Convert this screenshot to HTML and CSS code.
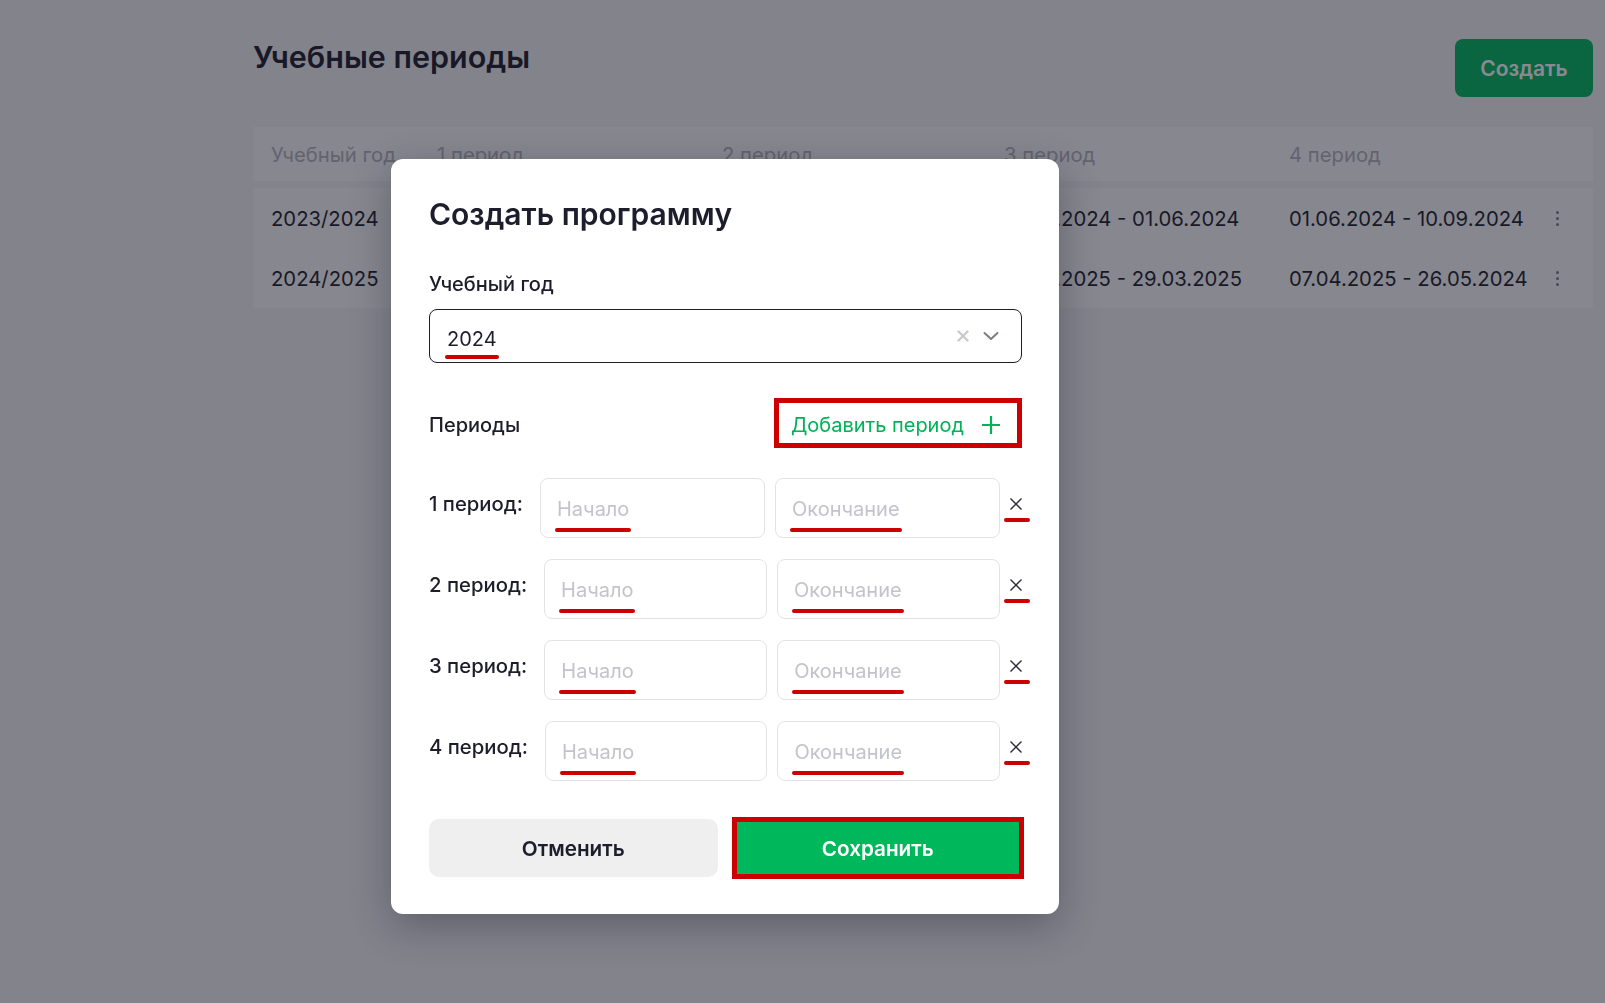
FILE: index.html
```html
<!DOCTYPE html>
<html lang="ru">
<head>
<meta charset="utf-8">
<title>Учебные периоды</title>
<link rel="stylesheet" href="styles.css">
</head>
<body>
<div class="page">
  <div class="page-head">
    <h1 class="page-title">Учебные периоды</h1>
    <button class="btn-create">Создать</button>
  </div>
  <div class="table">
    <div class="t-head">
      <div>Учебный год</div>
      <div>1 период</div>
      <div>2 период</div>
      <div>3 период</div>
      <div>4 период</div>
      <div></div>
    </div>
    <div class="t-body">
      <div class="t-row">
        <div>2023/2024</div>
        <div></div>
        <div></div>
        <div>09.01.2024 - 01.06.2024</div>
        <div>01.06.2024 - 10.09.2024</div>
        <div class="kebab"><span></span><span></span><span></span></div>
      </div>
      <div class="t-row">
        <div>2024/2025</div>
        <div></div>
        <div></div>
        <div>09.01.2025 - 29.03.2025</div>
        <div>07.04.2025 - 26.05.2024</div>
        <div class="kebab"><span></span><span></span><span></span></div>
      </div>
    </div>
  </div>
</div>

<div class="overlay">
  <div class="modal">
    <h2 class="modal-title">Создать программу</h2>

    <div class="field-label">Учебный год</div>
    <div class="select">
      <span class="select-value"><span class="mark">2024</span></span>
      <span class="select-icons">
        <svg class="icon-clear" width="12" height="12" viewBox="0 0 12 12"><path d="M1.5 1.5L10.5 10.5M10.5 1.5L1.5 10.5" stroke="#c9c9cf" stroke-width="2.4" stroke-linecap="round" fill="none"/></svg>
        <svg class="icon-chevron" width="16" height="10" viewBox="0 0 16 10"><path d="M1.5 2L8 8L14.5 2" stroke="#7b7b86" stroke-width="2" stroke-linecap="round" stroke-linejoin="round" fill="none"/></svg>
      </span>
    </div>

    <div class="periods-head">
      <span class="periods-label">Периоды</span>
      <button class="btn-add">
        <span class="btn-add-text">Добавить период</span>
        <svg width="20" height="20" viewBox="0 0 20 20"><path d="M10 1V19M1 10H19" stroke="#00b357" stroke-width="2.2" fill="none"/></svg>
      </button>
    </div>

    <div class="period-list">
      <div class="period-row">
        <span class="period-label">1 период:</span>
        <div class="date-input"><span class="placeholder mark">Начало</span></div>
        <div class="date-input"><span class="placeholder mark">Окончание</span></div>
        <span class="remove mark"><svg width="14" height="14" viewBox="0 0 14 14"><path d="M1.5 1.5L12.5 12.5M12.5 1.5L1.5 12.5" stroke="#2a2a38" stroke-width="1.4" fill="none"/></svg></span>
      </div>
      <div class="period-row">
        <span class="period-label">2 период:</span>
        <div class="date-input"><span class="placeholder mark">Начало</span></div>
        <div class="date-input"><span class="placeholder mark">Окончание</span></div>
        <span class="remove mark"><svg width="14" height="14" viewBox="0 0 14 14"><path d="M1.5 1.5L12.5 12.5M12.5 1.5L1.5 12.5" stroke="#2a2a38" stroke-width="1.4" fill="none"/></svg></span>
      </div>
      <div class="period-row">
        <span class="period-label">3 период:</span>
        <div class="date-input"><span class="placeholder mark">Начало</span></div>
        <div class="date-input"><span class="placeholder mark">Окончание</span></div>
        <span class="remove mark"><svg width="14" height="14" viewBox="0 0 14 14"><path d="M1.5 1.5L12.5 12.5M12.5 1.5L1.5 12.5" stroke="#2a2a38" stroke-width="1.4" fill="none"/></svg></span>
      </div>
      <div class="period-row">
        <span class="period-label">4 период:</span>
        <div class="date-input"><span class="placeholder mark">Начало</span></div>
        <div class="date-input"><span class="placeholder mark">Окончание</span></div>
        <span class="remove mark"><svg width="14" height="14" viewBox="0 0 14 14"><path d="M1.5 1.5L12.5 12.5M12.5 1.5L1.5 12.5" stroke="#2a2a38" stroke-width="1.4" fill="none"/></svg></span>
      </div>
    </div>

    <div class="modal-actions">
      <button class="btn-cancel">Отменить</button>
      <button class="btn-save">Сохранить</button>
    </div>
  </div>
</div>
</body>
</html>
```

FILE: styles.css
```css
* { box-sizing: border-box; }

html, body {
  margin: 0;
  padding: 0;
  height: 100%;
}

body {
  background: #f3f3f5;
  font-family: Inter, "Noto Sans", "DejaVu Sans", sans-serif;
  color: #1d1d2b;
  overflow: hidden;
}

button {
  font-family: inherit;
  border: none;
  cursor: pointer;
}

.page {
  padding: 39px 12px 0 253px;
}

.page-head {
  display: flex;
  justify-content: space-between;
  align-items: flex-start;
}

.page-title {
  margin: 0;
  font-size: 30.5px;
  line-height: 36px;
  font-weight: 600;
  color: #1d1d2b;
}

.btn-create {
  width: 138px;
  height: 58px;
  border-radius: 8px;
  background: #00b85c;
  color: #ffffff;
  font-size: 21px;
  font-weight: 600;
}

.table {
  margin-top: 30px;
}

.t-head,
.t-row {
  display: grid;
  grid-template-columns: 166px 285px 282px 285px 1fr 36px;
  align-items: center;
  padding: 0 18px;
  font-size: 20.3px;
}

.t-head {
  height: 54px;
  background: #fbfbfc;
  color: #b3b3bb;
  margin-bottom: 7px;
}

.t-body {
  background: #fafafb;
}

.t-row {
  height: 60px;
  color: #1d1d2b;
}

.kebab {
  display: flex;
  flex-direction: column;
  align-items: center;
  gap: 3px;
}

.kebab span {
  width: 3px;
  height: 3px;
  border-radius: 50%;
  background: #7d7d88;
}

.overlay {
  position: fixed;
  inset: 0;
  background: rgba(20, 20, 36, 0.5);
}

.modal {
  position: absolute;
  left: 391px;
  top: 159px;
  width: 668px;
  height: 755px;
  background: #ffffff;
  border-radius: 12px;
  box-shadow: 0 12px 40px rgba(10, 10, 25, 0.3);
  padding: 36px 37px 37px 38px;
}

.modal-title {
  margin: 0;
  font-size: 30px;
  line-height: 38px;
  font-weight: 600;
}

.field-label {
  margin-top: 39px;
  font-size: 20px;
  line-height: 24px;
  font-weight: 500;
}

.mark {
  position: relative;
}

.mark::after {
  content: "";
  position: absolute;
  left: -2px;
  right: -2px;
  height: 4px;
  border-radius: 2px;
  background: #cc0000;
}

.select {
  margin-top: 13px;
  height: 54px;
  border: 1px solid #1d1d2b;
  border-radius: 8px;
  display: flex;
  align-items: center;
  justify-content: space-between;
  padding: 0 22px 0 17px;
}

.select-value {
  font-size: 20px;
  line-height: 24px;
  padding-top: 5px;
}

.select-value .mark::after {
  bottom: -8px;
}

.select-icons {
  display: flex;
  align-items: center;
  gap: 14px;
}

.periods-head {
  margin-top: 36px;
  display: flex;
  justify-content: space-between;
  align-items: center;
}

.periods-label {
  font-size: 20px;
  font-weight: 500;
  padding-top: 3px;
}

.btn-add {
  height: 48px;
  display: flex;
  align-items: center;
  gap: 17px;
  padding: 0 20px 0 16px;
  margin-right: 1px;
  background: #ffffff;
  color: #00b357;
  font-size: 20px;
  outline: 5px solid #cc0000;
  outline-offset: -4px;
}

.btn-add-text {
  padding-top: 4px;
}

.btn-add svg {
  margin-top: 3px;
}

.period-list {
  margin-top: 31px;
  display: flex;
  flex-direction: column;
  gap: 21px;
  margin-right: -10px;
}

.period-row {
  display: flex;
  align-items: flex-start;
}

.period-label {
  font-size: 20.3px;
  line-height: 24px;
  font-weight: 500;
  padding-top: 14px;
  margin-right: 17px;
  white-space: nowrap;
}

.date-input {
  flex: 1;
  height: 60px;
  border: 1px solid #e3e3e7;
  border-radius: 8px;
  display: flex;
  align-items: center;
  padding: 2px 16px 0;
}

.date-input + .date-input {
  margin-left: 10px;
}

.placeholder {
  font-size: 20px;
  line-height: 24px;
  color: #c3c3cb;
}

.placeholder.mark::after {
  bottom: -11px;
}

.remove {
  width: 32px;
  height: 24px;
  margin-top: 14px;
  display: flex;
  justify-content: center;
  align-items: flex-start;
}

.remove svg {
  margin-top: 5px;
}

.remove.mark::after {
  left: 4px;
  right: 2px;
  bottom: -6px;
}

.modal-actions {
  margin-top: 38px;
  display: grid;
  grid-template-columns: 1fr 1fr;
  gap: 16px;
}

.btn-cancel,
.btn-save {
  height: 58px;
  font-size: 20.7px;
  font-weight: 600;
}

.btn-cancel {
  background: #efeff0;
  color: #1d1d2b;
  border-radius: 10px;
}

.btn-save {
  background: #00b85c;
  color: #ffffff;
  outline: 5px solid #cc0000;
  outline-offset: -3px;
}
```
